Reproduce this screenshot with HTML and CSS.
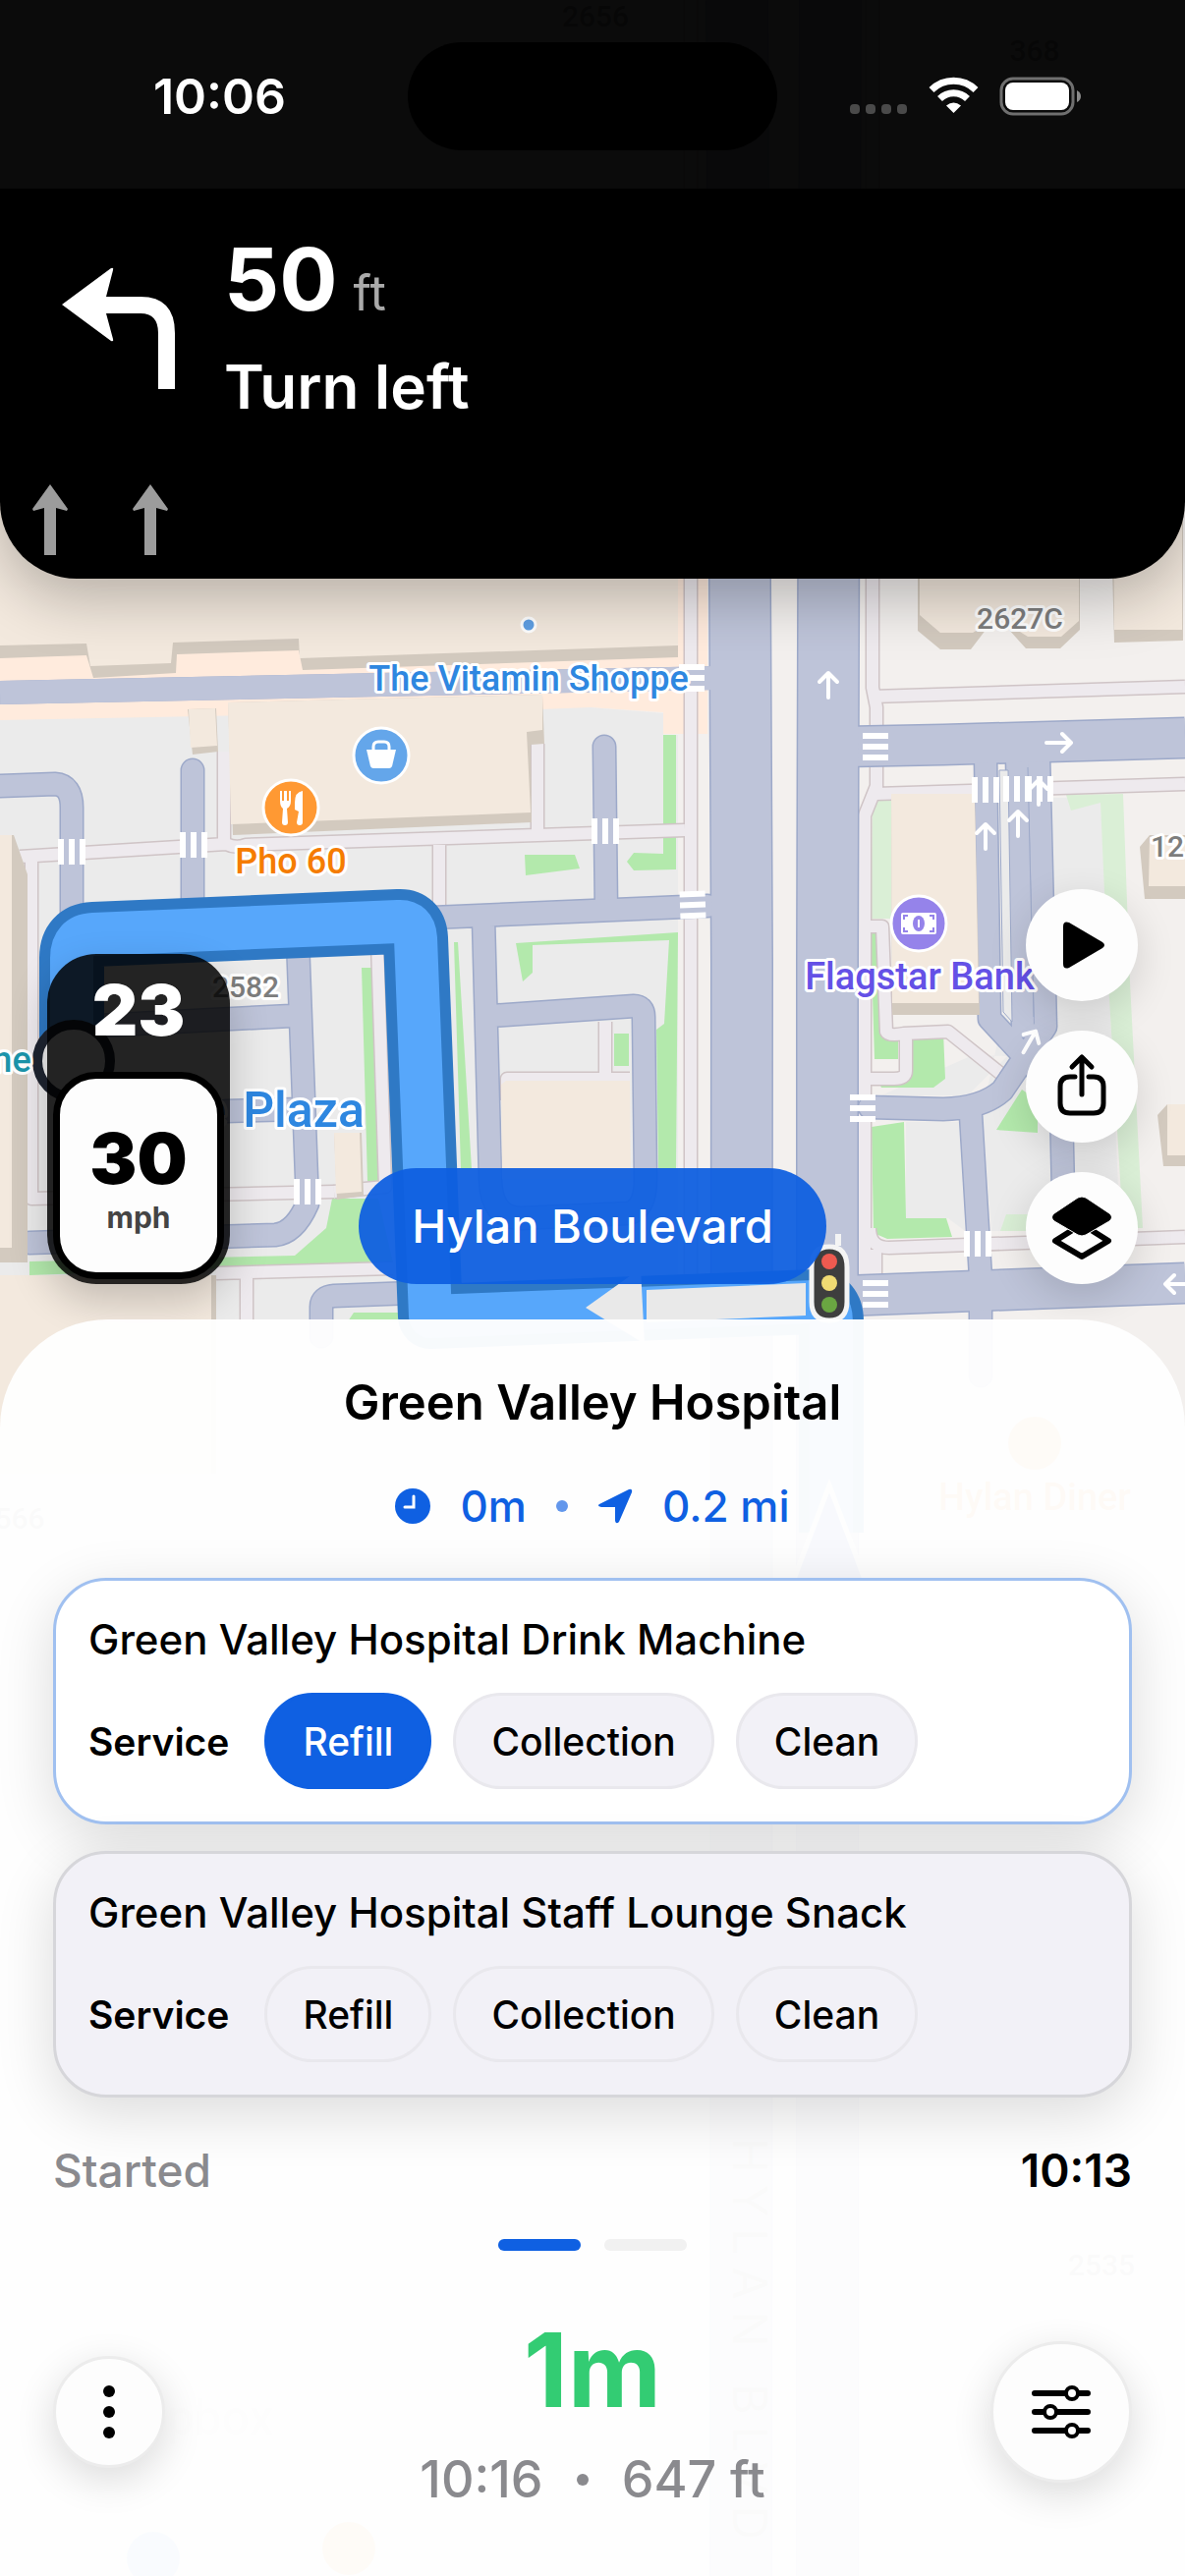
FILE: index.html
```
<!DOCTYPE html>
<html lang="en">
<head>
    <meta charset="UTF-8">
    <meta name="viewport" content="width=device-width, initial-scale=1.0">
    <title>Navigation</title>
    <link rel="stylesheet" href="styles.css">
</head>
<body>
    <div class="screen">

        <!-- Map -->
        <svg class="map" viewBox="0 0 1206 2622" preserveAspectRatio="xMidYMin slice" aria-hidden="true">
            <defs>
                <g id="walks">
                    <path d="M703 0V1340M888 0V700L892 720V800L880 830V1297M888 709L1206 699M892 808L1206 798"/>
                    <path d="M20 872L230 859Q240 864 250 860L547 850M228 765V858M547 757V850L697 845M447 860V930M32 870V1220L340 1213"/>
                    <path d="M384 960L392 1208L340 1213M220 1296L400 1291M251 1296V1345M516 1120V1098H641M616 1040V1098"/>
                    <path d="M880 943H898L902 1050Q904 1055 920 1052L965 1050L1020 1094M922 1055V1090Q922 1098 910 1098H880M885 1250Q885 1270 905 1270L1206 1259M891 1272V1297"/>
                </g>
                <g id="roads-small">
                    <path d="M0 800L56 798Q73 799 73 822V940M196 784V940M615 760L617 925"/>
                    <path d="M440 934L720 922M492 935L499 1200Q500 1240 530 1240L640 1235Q657 1230 657 1200L655 1035Q655 1024 645 1024L500 1034"/>
                    <path d="M302 930L313 1225Q300 1255 280 1257L30 1265M60 1046L296 1034M230 1131L305 1129"/>
                    <path d="M327 1360V1330Q327 1320 340 1319L420 1316"/>
                    <path d="M1003 770L1007 1037L1045 1078M1035 770L1041 1045M1057 770L1064 1045L1020 1110Q1000 1128 960 1129L885 1127M988 1135L998 1300V1400M1045 1075L1080 1125L1084 1300"/>
                </g>
                <g id="roads-mid">
                    <path d="M860 760L960 758L1206 751M860 1319L1206 1306"/>
                    <path d="M0 705L730 690" class="half"/>
                </g>
                <path id="blvd" d="M750 0L755 980L754 2622M845 0L842 980V2622"/>
                <path id="route" d="M73 1080V975Q73 952 95 951L405 938Q422 937 423 955L438 1340L829 1325Q846 1325 846 1345V1560"/>
                <g id="cross">
                    <path d="M-11 -13V13M0 -13V13M11 -13V13"/>
                </g>
                <g id="arrow">
                    <path d="M0 13V-11M-9 -3L0 -12L9 -3"/>
                </g>
            </defs>

            <rect width="1206" height="2622" fill="#f3f0ee"/>
            <path d="M0 500H720V747H675V725L600 720L550 728L0 760Z" fill="#ffebdd"/>
            <path d="M0 733L550 722L600 720L675 726V748H690V1345H0Z" fill="#ebebeb"/>
            <path d="M1070 812H1120L1140 1253H1009L1000 1130ZM922 1142H976L982 1253L965 1240H922ZM897 1115L985 1115L1025 1075L990 1074Z" fill="#ebebeb"/>

            <g fill="#b3e9ac">
                <path d="M675 748H688V885L645 886L638 877L645 868L675 869ZM534 870H585L590 884L535 891Z"/>
                <path d="M525 960L690 949L688 1190H670L668 1048L676 1042L681 957L542 962V990L532 999ZM462 959H466L480 1190H469ZM625 1052H640V1085H625Z"/>
                <path d="M368 985H379L386 1202H374ZM338 1220H385L400 1285L30 1298V1284L300 1278L332 1250ZM360 1336H405V1345H354Z"/>
                <path d="M886 950H895L898 1045L914 1048V1078H890ZM929 1050H960L962 1098L950 1107H897L892 1096H925ZM887 1147L920 1142L922 1240H963L969 1259L903 1261L889 1255ZM1040 1109L1056 1120V1153L1014 1150Z"/>
            </g>
            <path d="M888 817L907 812V935H886ZM1085 809L1143 808L1150 1000L1163 1250H1143L1128 1000L1120 817L1090 825ZM1024 1236H1110V1253H1018Z" fill="#daefd6"/>

            <use href="#walks" class="walk-edge"/>
            <use href="#walks" class="walk"/>
            <use href="#roads-small" class="small-edge"/>
            <use href="#roads-mid" class="mid-edge"/>
            <use href="#blvd" class="blvd-edge"/>
            <use href="#roads-small" class="small"/>
            <use href="#roads-mid" class="mid"/>
            <use href="#blvd" class="blvd"/>
            <path d="M1046 781L1052 1035M1017 784L1021 1030L1030 1040L1026 784Z" fill="#ebebeb" stroke="#9da9c9" stroke-width="1"/>

            <!-- Buildings -->
            <g fill="#d3cabf">
                <path d="M0 500H690V669L308 682L304 662L180 666L179 685L95 690L88 667L0 670Z"/>
                <path d="M232 715L552 707L554 757L540 758L541 837L237 850ZM191 722L220 721L222 765L196 768Z"/>
                <path d="M0 850H14L28 890V1285H0ZM0 1298H220V1500H0ZM340 1153H368L370 1217L343 1221Z"/>
                <path d="M934 580H1099V641L1079 660H1044L1026 640L1004 640L988 661H957L934 642ZM1130 500H1204V652L1134 654ZM907 808L992 810L997 1033H908Z"/>
                <path d="M1160 862L1170 850H1206V915H1165ZM1178 1135L1188 1124H1206V1187H1184Z"/>
            </g>
            <g fill="#f3e9de">
                <path d="M0 500H690V657L305 670L304 650L176 654L174 675L92 678L88 655L0 657Z"/>
                <path d="M232 715L552 707V743L536 745L540 827L235 839ZM192 722L219 721L221 759L194 761Z"/>
                <path d="M0 850H12V1270H0ZM0 1298H215V1500H0ZM340 1153H366L368 1213L342 1215ZM510 1104L515 1100H641L642 1200H511Z"/>
                <path d="M936 580H1098V632L1080 648H1046L1030 638H1000L990 644H957L936 626ZM1133 500H1203V641H1134ZM907 808H992L996 1021H908Z"/>
                <path d="M1170 852H1206V902H1169ZM1188 1124H1206V1176H1188Z"/>
            </g>

            <!-- Road markings -->
            <g class="mark">
                <use href="#cross" x="73" y="867"/><use href="#cross" x="197" y="860"/><use href="#cross" x="616" y="846"/>
                <use href="#cross" x="313" y="1213"/><use href="#cross" x="1003" y="804"/><use href="#cross" x="1035" y="803"/>
                <use href="#cross" x="1058" y="803"/><use href="#cross" x="995" y="1266"/>
                <use href="#cross" transform="translate(704 690) rotate(90)"/>
                <use href="#cross" transform="translate(891 760) rotate(90)"/>
                <use href="#cross" transform="translate(705 921) rotate(88)"/>
                <use href="#cross" transform="translate(878 1128) rotate(90)"/>
                <use href="#cross" transform="translate(891 1317) rotate(90)"/>
            </g>
            <g class="mark-arrow">
                <use href="#arrow" x="843" y="697"/><use href="#arrow" x="1003" y="851"/>
                <use href="#arrow" x="1036" y="838"/><use href="#arrow" x="1057" y="806"/>
                <use href="#arrow" transform="translate(1078 756) rotate(90)"/>
                <use href="#arrow" transform="translate(1048 1060) rotate(30)"/>
                <use href="#arrow" transform="translate(1198 1307) rotate(-90)"/>
            </g>

            <!-- Route -->
            <use href="#route" class="route-edge"/>
            <use href="#route" class="route"/>
            <path d="M596 1331L652 1291L656 1368ZM658 1313L820 1306V1339L658 1346Z" fill="#e9e9e9"/>
            <path d="M844 1512L900 1660H788Z" fill="#3f6fe0" stroke="#fff" stroke-width="5"/>
            <circle cx="75" cy="1080" r="37" fill="#ececec" stroke="#1e2430" stroke-width="10"/>
            <g>
                <path d="M826 1290Q826 1269 844 1269Q862 1269 862 1290V1325Q862 1344 844 1344Q826 1344 826 1325Z" fill="#3e3e3e" stroke="#f4f4f4" stroke-width="5"/>
                <path d="M853 1256V1268" stroke="#f4f4f4" stroke-width="6"/>
                <circle cx="844" cy="1284" r="8" fill="#ee5a50"/>
                <circle cx="844" cy="1306" r="8" fill="#f0db73"/>
                <circle cx="844" cy="1328" r="8" fill="#6aa542"/>
            </g>

            <!-- Places -->
            <circle cx="538" cy="636" r="7" fill="#5f9fe3" stroke="#fff" stroke-width="3"/>
            <g transform="translate(388 769)">
                <circle r="28" fill="#64a6ea" stroke="#fff" stroke-width="3"/>
                <path d="M-15 -6H15L11 11Q10 13 8 13H-8Q-10 13 -11 11Z" fill="#fff"/>
                <path d="M-8 -5V-9Q-8 -14 -3 -14H3Q8 -14 8 -9V-5" fill="none" stroke="#fff" stroke-width="3"/>
            </g>
            <g transform="translate(296 822)">
                <circle r="28" fill="#ff9933" stroke="#fff" stroke-width="3"/>
                <path d="M-11 -17V-7Q-11 -1 -8 1L-9 15Q-9 18 -6 18Q-3 18 -3 15L-4 1Q0 -1 0 -7V-17H-2V-7H-4V-17H-7V-7H-9V-17ZM12 -17Q4 -16 4 -5V2L8 4L6 15Q6 18 9 18Q12 18 12 15Z" fill="#fff"/>
            </g>
            <g transform="translate(935 940)">
                <circle r="28" fill="#9583ea" stroke="#fff" stroke-width="3"/>
                <rect x="-18" y="-11" width="36" height="22" rx="2" fill="#fff"/>
                <path d="M-15 -4V-8H-11M11 -8H15V-4M15 4V8H11M-11 8H-15V4" fill="none" stroke="#9583ea" stroke-width="2"/>
                <ellipse rx="6" ry="8" fill="#9583ea"/>
                <path d="M0 -4V4" stroke="#fff" stroke-width="2"/>
            </g>
            <g class="label">
                <text x="538" y="703" font-size="36" fill="#2e87e0">The Vitamin Shoppe</text>
                <text x="296" y="889" font-size="36" fill="#f57c00">Pho 60</text>
                <text x="936" y="1007" font-size="38" fill="#6451e6">Flagstar Bank</text>
                <text x="1038" y="640" font-size="30" fill="#7d7d7d">2627C</text>
                <text x="1188" y="872" font-size="30" fill="#7d7d7d">12</text>
                <text x="250" y="1015" font-size="30" fill="#7d7d7d">2582</text>
                <text x="217" y="1147" font-size="50" fill="#2e87e0">e</text>
                <text x="309" y="1147" font-size="50" fill="#2e87e0">Plaza</text>
                <text x="12" y="1091" font-size="36" fill="#1b95ab">ne</text>
                <text x="1053" y="1537" font-size="38" fill="#f57c00">Hylan Diner</text>
                <text x="20" y="1556" font-size="30" fill="#7d7d7d">566</text>
                <text x="1121" y="2316" font-size="30" fill="#7d7d7d">2535</text>
                <text x="606" y="27" font-size="30" fill="#7d7d7d">2656</text>
                <text x="1053" y="62" font-size="30" fill="#7d7d7d">368</text>
                <text x="224" y="2478" font-size="50" fill="#d8d8d8">pbox</text>
            </g>
            <circle cx="54" cy="2464" r="28" fill="none" stroke="#fff" stroke-width="4"/>
            <circle cx="1053" cy="1469" r="27" fill="#ff9933"/>
            <circle cx="156" cy="2604" r="27" fill="#64a6ea"/>
            <circle cx="355" cy="2594" r="27" fill="#ff9933"/>
            <text class="street-name" transform="translate(746 2176) rotate(90)">HYLAN BLVD</text>
        </svg>

        <header class="top">
            <div class="status">
                <span class="clock">10:06</span>
                <span class="island"></span>
                <svg class="status-icons" viewBox="0 0 236 40" aria-hidden="true">
                    <g fill="#4a4a4a">
                        <rect x="0" y="28" width="10" height="10" rx="4"/><rect x="16" y="28" width="10" height="10" rx="4"/>
                        <rect x="32" y="28" width="10" height="10" rx="4"/><rect x="48" y="28" width="10" height="10" rx="4"/>
                    </g>
                    <g fill="none" stroke="#fff" stroke-width="7">
                        <path d="M83 13.500A32 32 0 0 1 128 13.500"/>
                        <path d="M91.500 22.500A20 20 0 0 1 119.500 22.500"/>
                    </g>
                    <path d="M98 29.500Q105.500 23.500 113 29.500L105.500 37Z" fill="#fff"/>
                    <rect x="154" y="2" width="73" height="36" rx="12" fill="none" stroke="#6f6f6f" stroke-width="3"/>
                    <rect x="158" y="6" width="65" height="28" rx="8" fill="#fff"/>
                    <path d="M231 14Q235 16 235 20Q235 24 231 26Z" fill="#8a8a8a"/>
                </svg>
            </div>
            <div class="maneuver">
                <div class="turn">
                    <svg class="turn-icon" viewBox="0 0 115 124" aria-hidden="true">
                        <path d="M0 38L50 1Q53 0 52 3L45 30H80Q115 30 115 67V124H98V67Q98 47 80 47H45L52 73Q53 76 50 75Z" fill="#fff"/>
                    </svg>
                    <div class="turn-text">
                        <p class="distance">50 <small>ft</small></p>
                        <p class="instruction">Turn left</p>
                    </div>
                </div>
                <div class="lanes">
                    <svg viewBox="0 0 36 72" aria-hidden="true"><path d="M18 0L36 25L35 27L24 24V72H12V24L1 27L0 25Z" fill="#9c9c9c"/></svg>
                    <svg viewBox="0 0 36 72" aria-hidden="true"><path d="M18 0L36 25L35 27L24 24V72H12V24L1 27L0 25Z" fill="#9c9c9c"/></svg>
                </div>
            </div>
        </header>

        <main class="overlay">
            <div class="speed">
                <span class="speed-now">23</span>
                <div class="speed-limit">
                    <span class="limit">30</span>
                    <span class="unit">mph</span>
                </div>
            </div>
            <div class="street">Hylan Boulevard</div>
            <div class="tools">
                <button class="round" aria-label="Start">
                    <svg viewBox="0 0 64 64"><path d="M13 13Q13 7 19 9L53 29Q57 32 53 35L19 55Q13 57 13 51Z"/></svg>
                </button>
                <button class="round" aria-label="Share">
                    <svg viewBox="0 0 64 64"><path d="M25 22H20Q10 22 10 32V49Q10 59 20 59H44Q54 59 54 49V32Q54 22 44 22H39M32 40V3M22 12L32 2L42 12" fill="none" stroke="#000" stroke-width="5" stroke-linecap="round" stroke-linejoin="round"/></svg>
                </button>
                <button class="round" aria-label="Layers">
                    <svg viewBox="0 0 64 64">
                        <path d="M32 28L59 45L32 61L5 45Z" fill="none" stroke="#000" stroke-width="6" stroke-linejoin="round"/>
                        <path d="M28 1Q32 -1 36 1L60 17Q65 21 60 25L36 39Q32 41 28 39L4 25Q-1 21 4 17Z" stroke="#fdfdfd" stroke-width="1"/>
                    </svg>
                </button>
            </div>
        </main>

        <section class="sheet">
            <h1>Green Valley Hospital</h1>
            <div class="summary">
                <svg viewBox="0 0 36 36" aria-hidden="true"><circle cx="18" cy="18" r="18" fill="#0f60e2"/><path d="M19 8V19H10" fill="none" stroke="#fff" stroke-width="3" stroke-linecap="round"/></svg>
                <span>0m</span>
                <i class="dot"></i>
                <svg viewBox="0 0 36 36" aria-hidden="true"><path d="M2 16L32 1Q36 0 35 4L22 34Q19 37 18 33V19H4Q-1 18 2 16Z" fill="#0f60e2"/></svg>
                <span>0.2 mi</span>
            </div>

            <div class="cards">
                <article class="card active">
                    <h2>Green Valley Hospital Drink Machine</h2>
                    <div class="services">
                        <strong>Service</strong>
                        <button class="chip selected">Refill</button>
                        <button class="chip">Collection</button>
                        <button class="chip">Clean</button>
                    </div>
                </article>
                <article class="card">
                    <h2>Green Valley Hospital Staff Lounge Snack</h2>
                    <div class="services">
                        <strong>Service</strong>
                        <button class="chip">Refill</button>
                        <button class="chip">Collection</button>
                        <button class="chip">Clean</button>
                    </div>
                </article>
            </div>

            <div class="started">
                <span class="muted">Started</span>
                <span class="started-time">10:13</span>
            </div>

            <div class="pages">
                <span class="page current"></span>
                <span class="page"></span>
            </div>

            <footer class="trip">
                <button class="round more" aria-label="More">
                    <svg viewBox="0 0 64 64"><circle cx="32" cy="11" r="6"/><circle cx="32" cy="32" r="6"/><circle cx="32" cy="53" r="6"/></svg>
                </button>
                <div class="eta">
                    <p class="eta-time">1m</p>
                    <p class="eta-info">10:16 <i class="dot"></i> 647 ft</p>
                </div>
                <button class="round filter" aria-label="Options">
                    <svg viewBox="0 0 64 64">
                        <path d="M5 13H59M5 32H59M5 51H59" stroke="#000" stroke-width="6" stroke-linecap="round"/>
                        <g fill="#fff" stroke="#000" stroke-width="4"><circle cx="43" cy="13" r="6"/><circle cx="21" cy="32" r="6"/><circle cx="43" cy="51" r="6"/></g>
                    </svg>
                </button>
            </footer>
        </section>
    </div>
</body>
</html>
```
FILE: styles.css
```
* {
    margin: 0;
    padding: 0;
    box-sizing: border-box;
    font-family: 'Inter', 'Roboto', sans-serif;
}

.screen {
    position: relative;
    display: flex;
    flex-direction: column;
    min-height: 100vh;
    overflow: hidden;
    color: #000;
}

/* Map */
.map {
    position: absolute;
    top: 0;
    left: 0;
    width: 100%;
    height: 100%;
    z-index: -1;
}

.walk, .walk-edge,
.small, .small-edge,
.mid, .mid-edge,
.blvd, .blvd-edge,
.route, .route-edge {
    fill: none;
    stroke-linejoin: round;
}

.walk-edge { stroke: #cfc4c6; stroke-width: 15; }
.walk { stroke: #eeeaee; stroke-width: 12; }
.small-edge { stroke: #9da9c9; stroke-width: 25; stroke-linecap: round; }
.small { stroke: #bec4d9; stroke-width: 22; stroke-linecap: round; }
.mid-edge { stroke: #9da9c9; stroke-width: 43; }
.mid { stroke: #bec4d9; stroke-width: 40; }
.blvd-edge { stroke: #9da9c9; stroke-width: 64; }
.blvd { stroke: #bec4d9; stroke-width: 61; }
.half { stroke-width: 24; }
.route-edge { stroke: #2f79c5; stroke-width: 66; }
.route { stroke: #57a7fb; stroke-width: 44; }

.mark {
    stroke: #fff;
    stroke-width: 6;
}

.mark-arrow {
    fill: none;
    stroke: #fff;
    stroke-width: 4;
    stroke-linecap: round;
    stroke-linejoin: round;
}

.label text {
    font-family: 'Roboto', sans-serif;
    font-weight: 500;
    text-anchor: middle;
    stroke: #fff;
    stroke-width: 6;
    stroke-linejoin: round;
    paint-order: stroke;
}

.street-name {
    font-size: 48px;
    letter-spacing: 12px;
    fill: #7d7d7d;
}

/* Header */
.top {
    color: #fff;
    border-radius: 0 0 78px 78px;
    overflow: hidden;
    box-shadow: 0 20px 60px rgba(0, 0, 0, 0.25);
}

.status {
    display: grid;
    grid-template-columns: 1fr 376px 1fr;
    align-items: center;
    justify-items: center;
    height: 192px;
    padding-top: 4px;
    background-color: rgba(3, 3, 3, 0.97);
}

.clock {
    padding-left: 32px;
    font-size: 50px;
    font-weight: 600;
}

.island {
    width: 100%;
    height: 110px;
    border-radius: 55px;
    background-color: #000;
}

.status-icons {
    width: 236px;
    height: 40px;
    margin-right: 32px;
}

.maneuver {
    padding: 42px 33px 24px;
    background-color: #000;
}

.turn {
    display: flex;
    align-items: center;
    gap: 50px;
    padding-left: 30px;
}

.turn-icon {
    width: 115px;
    height: 124px;
}

.turn-text {
    display: grid;
    gap: 20px;
}

.distance {
    display: flex;
    align-items: baseline;
    gap: 16px;
    height: 100px;
    font-size: 88px;
    font-weight: 700;
    line-height: 100px;
}

.distance small {
    font-size: 50px;
    font-weight: 400;
    line-height: 60px;
    color: #aaa;
}

.instruction {
    font-size: 62px;
    font-weight: 600;
    line-height: 80px;
}

.lanes {
    display: flex;
    gap: 66px;
    margin-top: 59px;
}

.lanes svg {
    width: 36px;
    height: 72px;
}

/* Controls over the map */
.overlay {
    flex: 1;
    display: grid;
    grid-template-columns: 1fr auto 1fr;
    align-items: end;
    padding: 0 48px 36px;
}

.speed {
    width: 186px;
    padding: 22px 6px 5px;
    border-radius: 50px;
    background-color: rgba(0, 0, 0, 0.85);
    box-shadow: 0 16px 40px rgba(0, 0, 0, 0.2);
    text-align: center;
}

.speed span {
    display: block;
}

.speed-now, .limit {
    font-size: 72px;
    font-weight: 900;
    line-height: 70px;
}

.speed-now {
    margin-bottom: 28px;
    color: #fff;
}

.speed-limit {
    height: 211px;
    padding-top: 46px;
    border: 7px solid #000;
    border-radius: 44px;
    background-color: #fdfdfd;
}

.unit {
    font-size: 30px;
    font-weight: 700;
    line-height: 50px;
    color: #444;
}

.street {
    padding: 0 54px;
    border-radius: 60px;
    background-color: rgba(14, 95, 224, 0.94);
    color: #fff;
    font-size: 47px;
    font-weight: 500;
    line-height: 118px;
}

.tools {
    display: grid;
    gap: 30px;
    justify-self: end;
}

.round {
    display: grid;
    place-items: center;
    width: 114px;
    height: 114px;
    border: none;
    border-radius: 50%;
    background-color: #fdfdfd;
    box-shadow: 0 12px 40px rgba(0, 0, 0, 0.14);
    cursor: pointer;
}

.round svg {
    width: 64px;
    height: 64px;
    overflow: visible;
}

/* Bottom sheet */
.sheet {
    padding: 55px 54px 68px;
    border-radius: 110px 110px 0 0;
    background-color: rgba(254, 254, 254, 0.97);
}

h1 {
    font-size: 49px;
    font-weight: 600;
    line-height: 60px;
    text-align: center;
}

.summary {
    display: flex;
    align-items: center;
    justify-content: center;
    gap: 30px;
    margin: 49px 0 47px;
    color: #0f60e2;
    font-size: 44px;
    font-weight: 500;
    line-height: 52px;
}

.summary svg {
    width: 36px;
    height: 36px;
}

.dot {
    display: inline-block;
    width: 12px;
    height: 12px;
    border-radius: 50%;
    background-color: currentColor;
}

.summary .dot {
    opacity: 0.65;
}

.cards {
    display: grid;
    gap: 27px;
}

.card {
    padding: 36px 33px 33px;
    border: 3px solid #d6d6da;
    border-radius: 54px;
    background-color: #f2f1f7;
    box-shadow: 0 16px 60px rgba(0, 0, 0, 0.14);
}

.card.active {
    border-color: #a0c0f0;
    background-color: #fff;
}

h2 {
    font-size: 42px;
    font-weight: 500;
    line-height: 48px;
}

.services {
    display: flex;
    align-items: center;
    gap: 22px;
    margin-top: 30px;
}

.services strong {
    margin-right: 14px;
    font-size: 39px;
    font-weight: 600;
}

.chip {
    height: 98px;
    padding: 0 36px;
    border: 3px solid #e9e8ed;
    border-radius: 49px;
    background-color: #f2f1f7;
    color: #000;
    font-size: 39px;
    font-weight: 500;
    cursor: pointer;
}

.chip.selected {
    border-color: #0f60e2;
    background-color: #0f60e2;
    color: #fff;
}

.started {
    display: flex;
    justify-content: space-between;
    margin-top: 48px;
    font-size: 46px;
    font-weight: 500;
    line-height: 52px;
}

.started-time {
    font-weight: 600;
}

.muted {
    color: #8a8a8e;
}

.pages {
    display: flex;
    justify-content: center;
    gap: 24px;
    margin: 44px 0 65px;
}

.page {
    width: 84px;
    height: 12px;
    border-radius: 6px;
    background-color: #f1f1f1;
}

.page.current {
    background-color: #0f60e2;
}

.trip {
    display: grid;
    grid-template-columns: 1fr auto 1fr;
    align-items: center;
}

.more, .filter {
    border: 3px solid #ececec;
}

.filter {
    justify-self: end;
    width: 144px;
    height: 144px;
}

.eta {
    text-align: center;
}

.eta-time {
    margin-bottom: 26px;
    color: #33cc73;
    font-size: 104px;
    font-weight: 700;
    line-height: 112px;
}

.eta-info {
    display: flex;
    align-items: center;
    justify-content: center;
    gap: 34px;
    color: #8a8a8e;
    font-size: 52px;
    font-weight: 500;
    line-height: 60px;
}
```
